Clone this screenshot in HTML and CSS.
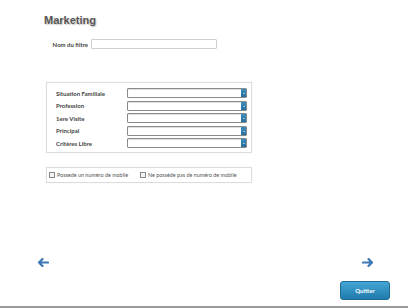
FILE: index.html
```html
<!DOCTYPE html>
<html lang="fr">

<head>
  <meta charset="UTF-8">
  <meta name="viewport" content="width=device-width, initial-scale=1.0">
  <title>Marketing</title>
  <link rel="stylesheet" href="styles.css">
</head>

<body>

  <div class="page">
    <h1 class="title">Marketing</h1>

    <div class="filter-row">
      <label class="filter-label" for="filterName">Nom du filtre</label>
      <input type="text" id="filterName" class="filter-input">
    </div>

    <div class="panel criteria">
      <div class="crit-row">
        <span class="crit-label">Situation Familiale</span>
        <div class="select"><span class="select-btn"></span></div>
      </div>
      <div class="crit-row">
        <span class="crit-label">Profession</span>
        <div class="select"><span class="select-btn"></span></div>
      </div>
      <div class="crit-row">
        <span class="crit-label">1ere Visite</span>
        <div class="select"><span class="select-btn"></span></div>
      </div>
      <div class="crit-row">
        <span class="crit-label">Principal</span>
        <div class="select"><span class="select-btn"></span></div>
      </div>
      <div class="crit-row">
        <span class="crit-label">Critères Libre</span>
        <div class="select"><span class="select-btn"></span></div>
      </div>
    </div>

    <div class="panel mobile">
      <label class="check check-first"><span class="box"></span>Possede un numéro de mobile</label>
      <label class="check"><span class="box"></span>Ne possède pas de numéro de mobile</label>
    </div>

    <div class="nav-row">
      <svg class="arrow" width="12" height="9" viewBox="0 0 12 9">
        <path d="M11 4.5H2M5.5 1L2 4.5L5.5 8" fill="none" stroke="#3b77b4" stroke-width="2.2" stroke-linecap="round" stroke-linejoin="round"/>
      </svg>
      <svg class="arrow" width="12" height="9" viewBox="0 0 12 9">
        <path d="M1 4.5H10M6.5 1L10 4.5L6.5 8" fill="none" stroke="#3b77b4" stroke-width="2.2" stroke-linecap="round" stroke-linejoin="round"/>
      </svg>
    </div>

    <div class="button-row">
      <button type="button" class="quit">Quitter</button>
    </div>

    <div class="footer"></div>
  </div>

</body>

</html>
```

FILE: styles.css
```css
body {
  margin: 0;
  background: #fff;
  font-family: Lato, "Liberation Sans", sans-serif;
  color: #444;
}

.page {
  width: 408px;
  height: 308px;
  padding-top: 14px;
  box-sizing: border-box;
  display: flex;
  flex-direction: column;
  overflow: hidden;
}

.title {
  margin: 0 0 0 44px;
  height: 12px;
  font-family: "Liberation Sans", sans-serif;
  font-size: 11px;
  line-height: 12px;
  font-weight: bold;
  color: #575757;
  text-shadow: 1px 1px 1px #c4c4c4;
}

.filter-row {
  display: flex;
  align-items: center;
  margin-top: 13px;
  height: 10px;
}

.filter-label {
  width: 91px;
  text-align: right;
  font-size: 6px;
  font-weight: bold;
  padding-right: 3px;
  box-sizing: border-box;
}

.filter-input {
  width: 126px;
  height: 10px;
  box-sizing: border-box;
  margin: 0;
  padding: 0;
  border: 1px solid #cfcfcf;
  border-radius: 1px;
}

.panel {
  margin-left: 46px;
  width: 206px;
  box-sizing: border-box;
  border: 1px solid #dcdcdc;
  box-shadow: 0 0 1px #eee;
}

.criteria {
  margin-top: 33px;
  height: 71px;
  padding: 5px 0 0 9px;
  display: flex;
  flex-direction: column;
  gap: 2.6px;
}

.crit-row {
  display: flex;
  align-items: center;
  height: 10px;
}

.crit-label {
  width: 71px;
  font-size: 6px;
  font-weight: bold;
  color: #444;
}

.select {
  width: 120px;
  height: 10px;
  box-sizing: border-box;
  border: 1px solid #8a8a8a;
  border-radius: 1px;
  box-shadow: inset 0 1px 1px #ddd;
  display: flex;
  justify-content: flex-end;
}

.select-btn {
  width: 5px;
  height: 100%;
  background: linear-gradient(#3d8fc0, #236d9c);
  position: relative;
}

.select-btn::after {
  content: "";
  position: absolute;
  left: 1.5px;
  top: 4px;
  border-left: 1px solid transparent;
  border-right: 1px solid transparent;
  border-top: 1.5px solid #fff;
}

.mobile {
  margin-top: 14px;
  height: 16px;
  display: flex;
  align-items: center;
  padding-left: 2px;
}

.check {
  display: flex;
  align-items: center;
  font-size: 5.4px;
  color: #555;
}

.check-first {
  width: 91px;
}

.box {
  width: 4px;
  height: 4px;
  border: 1px solid #888;
  background: #f4f4f4;
  margin-right: 2px;
}

.nav-row {
  margin-top: 75px;
  height: 9px;
  display: flex;
  justify-content: space-between;
  padding: 0 34px 0 37px;
}

.button-row {
  margin-top: 14px;
  height: 19px;
  display: flex;
  justify-content: flex-end;
  padding-right: 18px;
}

.quit {
  width: 50px;
  height: 19px;
  border: 1px solid #1e6d97;
  border-radius: 3px;
  background: linear-gradient(#44a6d6, #1f7aab);
  color: #fff;
  font-family: Lato, sans-serif;
  font-size: 6px;
  font-weight: bold;
  padding: 0;
}

.footer {
  margin-top: 6px;
  height: 2px;
  background: #9a9a9a;
}
```
